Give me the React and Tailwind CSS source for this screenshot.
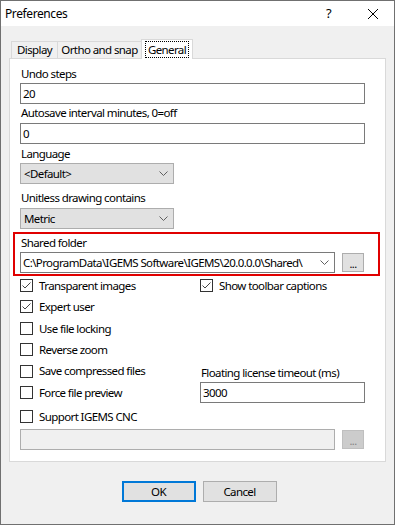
import React from 'react'

const font = { fontFamily: '"Segoe UI", "Noto Sans", "Liberation Sans", sans-serif' }

function Chevron() {
  return (
    <svg width="9" height="6" viewBox="0 0 9 6" className="shrink-0">
      <path d="M0.5 0.5 L4.5 4.5 L8.5 0.5" fill="none" stroke="#606060" strokeWidth="1" />
    </svg>
  )
}

function Check({ checked, label, className = '' }) {
  return (
    <div className={`flex items-center h-[13px] whitespace-nowrap ${className}`}>
      <div className="w-[13px] h-[13px] shrink-0 border border-[#333333] bg-white flex items-center justify-center">
        {checked && (
          <svg width="11" height="11" viewBox="0 0 11 11">
            <path d="M1.5 5.5 L4 8 L9.5 2.5" fill="none" stroke="#444444" strokeWidth="1" />
          </svg>
        )}
      </div>
      <span className="ml-[6px]">{label}</span>
    </div>
  )
}

function Label({ children, className = '' }) {
  return <div className={`h-[18px] leading-[18px] pl-[1px] whitespace-nowrap ${className}`}>{children}</div>
}

function TextBox({ value, className = '' }) {
  return (
    <div className={`h-[21px] border border-[#7a7a7a] bg-white leading-[19px] pl-[2px] ${className}`}>
      {value}
    </div>
  )
}

function Select({ value, className = '' }) {
  return (
    <div className={`h-[21px] w-[154px] border border-[#adadad] bg-[#e1e1e1] flex items-center justify-between pl-[3px] pr-[5px] ${className}`}>
      <span>{value}</span>
      <Chevron />
    </div>
  )
}

export default function App() {
  return (
    <div
      className="w-[395px] h-[525px] bg-[#f0f0f0] border border-[#707070] flex flex-col text-black text-[11.5px] tracking-[-0.6px]"
      style={font}
    >
      <div className="h-[25px] bg-white flex items-center shrink-0">
        <span className="ml-[4px] text-[12px] tracking-[-0.4px]">Preferences</span>
        <span className="ml-auto mr-[36px] text-[13px]">?</span>
        <svg width="12" height="12" viewBox="0 0 12 12" className="mr-[15px]">
          <path d="M1 1 L11 11 M11 1 L1 11" stroke="#000" strokeWidth="1" />
        </svg>
      </div>

      <div className="mt-[13px] ml-[10px] h-[20px] flex items-end -mb-px relative z-10 whitespace-nowrap">
        <div className="h-[17px] mb-px w-[47px] border border-b-0 border-[#d9d9d9] flex items-center justify-center">Display</div>
        <div className="h-[17px] mb-px w-[85px] -ml-px border border-b-0 border-[#d9d9d9] flex items-center justify-center">Ortho and snap</div>
        <div className="h-[20px] w-[52px] -ml-px bg-white border border-b-0 border-[#d9d9d9] flex items-start justify-center pt-[1px]">
          <span className="border border-dotted border-black px-[2px] h-[17px] leading-[15px]">General</span>
        </div>
      </div>

      <div className="ml-[8px] w-[377px] h-[404px] bg-white border border-[#d9d9d9] flex flex-col">
        <Label className="mt-[6px] ml-[10px]">Undo steps</Label>
        <TextBox value="20" className="ml-[10px] w-[345px]" />
        <Label className="ml-[10px]">Autosave interval minutes, 0=off</Label>
        <TextBox value="0" className="ml-[10px] w-[345px] mt-[1px]" />
        <Label className="mt-[1px] ml-[10px]">Language</Label>
        <Select value="<Default>" className="ml-[10px]" />
        <Label className="mt-[5px] ml-[10px]">Unitless drawing contains</Label>
        <Select value="Metric" className="ml-[10px] mt-[1px]" />

        <div className="mt-[3px] ml-[3px] w-[367px] h-[44px] border-2 border-[#e00000] pl-[5px] flex flex-col">
          <Label>Shared folder</Label>
          <div className="flex items-center">
            <div className="h-[21px] w-[315px] border border-[#7a7a7a] bg-white flex items-center justify-between pl-[2px] pr-[5px] whitespace-nowrap overflow-hidden">
              <span>C:\ProgramData\IGEMS Software\IGEMS\20.0.0.0\Shared\</span>
              <Chevron />
            </div>
            <div className="ml-[7px] h-[19px] w-[22px] border border-[#adadad] bg-[#e1e1e1] text-[11px] flex items-end justify-center leading-[14px]">...</div>
          </div>
        </div>

        <div className="flex ml-[10px] pt-[3px]">
          <div className="w-[180px] flex flex-col gap-[8.4px]">
            <Check checked label="Transparent images" />
            <Check checked label="Expert user" />
            <Check label="Use file locking" />
            <Check label="Reverse zoom" />
            <Check label="Save compressed files" />
            <Check label="Force file preview" />
            <Check label="Support IGEMS CNC" className="mt-[3.1px]" />
          </div>
          <div className="flex flex-col">
            <Check checked label="Show toolbar captions" />
            <Label className="mt-[72px]">Floating license timeout (ms)</Label>
            <TextBox value="3000" className="w-[165px]" />
          </div>
        </div>

        <div className="flex items-center ml-[10px] mt-[5.5px]">
          <div className="h-[21px] w-[315px] border border-[#adadad] bg-[#f0f0f0]" />
          <div className="ml-[7px] h-[19px] w-[22px] border border-[#bfbfbf] bg-[#cccccc] text-[11px] text-[#838383] flex items-end justify-center leading-[14px]">...</div>
        </div>
      </div>

      <div className="mt-[19px] flex justify-center gap-[7px] pl-[3px]">
        <div className="w-[74px] h-[21px] border-2 border-[#0078d7] bg-[#e1e1e1] flex items-center justify-center">OK</div>
        <div className="w-[74px] h-[21px] border border-[#adadad] bg-[#e1e1e1] flex items-center justify-center">Cancel</div>
      </div>
    </div>
  )
}
